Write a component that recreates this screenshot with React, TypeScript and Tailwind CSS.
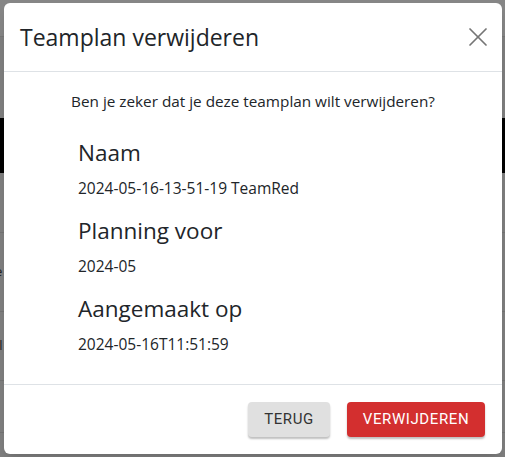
import { X } from 'lucide-react';

const details = [
  { label: 'Naam', value: '2024-05-16-13-51-19 TeamRed' },
  { label: 'Planning voor', value: '2024-05' },
  { label: 'Aangemaakt op', value: '2024-05-16T11:51:59' },
];

export default function App() {
  return (
    <div className="relative h-[457px] w-[505px] overflow-hidden bg-[#7f7f7f] font-['Open_Sans',sans-serif] text-[#212529]">
      {/* page behind the backdrop */}
      <div className="flex flex-col">
        <div className="h-[37px] border-b border-[#777] bg-[#868686]" />
        <div className="h-[81px]" />
        <div className="h-[55px] bg-black" />
        <div className="h-[60px] border-b border-[#747474]" />
        <div className="flex h-[79px] items-center border-b border-[#747474] text-[13px] text-[#222]">
          <span className="-ml-[5px]">e</span>
        </div>
        <div className="flex h-[69px] items-center border-b border-[#747474] text-[13px] text-[#222]">
          <span className="-ml-[4px]">ll</span>
        </div>
        <div className="h-[52px] border-b border-[#747474]" />
      </div>

      <div className="absolute left-[4px] top-[3px] flex h-[451px] w-[498px] flex-col rounded-[6px] bg-white shadow-lg">
        <div className="flex h-[69px] items-center justify-between border-b border-[#dee2e6] pl-[16px] pr-[8px]">
          <h2 className="text-[23px] leading-none">Teamplan verwijderen</h2>
          <button type="button" className="text-[#757575]">
            <X className="h-[32px] w-[32px]" strokeWidth={1.3} />
          </button>
        </div>

        <div className="flex flex-1 flex-col">
          <p className="mt-[18px] text-center text-[15.3px] leading-[22px]">
            Ben je zeker dat je deze teamplan wilt verwijderen?
          </p>
          <div className="flex flex-col pl-[74px] pt-[26px]">
            {details.map(({ label, value }) => (
              <div key={label} className="mb-[15px] flex flex-col">
                <h3 className="text-[22.5px] leading-[30px]">{label}</h3>
                <span className="mt-[7px] text-[15.5px] leading-[26px]">{value}</span>
              </div>
            ))}
          </div>
        </div>

        <div className="flex h-[70px] items-center justify-end gap-[17px] border-t border-[#dee2e6] pr-[17px]">
          <button
            type="button"
            className="h-[35px] w-[82px] rounded-[4px] bg-[#e0e0e0] font-['Roboto',sans-serif] text-[15px] tracking-[0.6px] text-[#333] shadow-[0_2px_2px_rgba(0,0,0,0.25)]"
          >
            TERUG
          </button>
          <button
            type="button"
            className="h-[35px] w-[138px] rounded-[4px] bg-[#d32f2f] font-['Roboto',sans-serif] text-[15px] tracking-[0.6px] text-white shadow-[0_2px_2px_rgba(0,0,0,0.25)]"
          >
            VERWIJDEREN
          </button>
        </div>
      </div>
    </div>
  );
}
